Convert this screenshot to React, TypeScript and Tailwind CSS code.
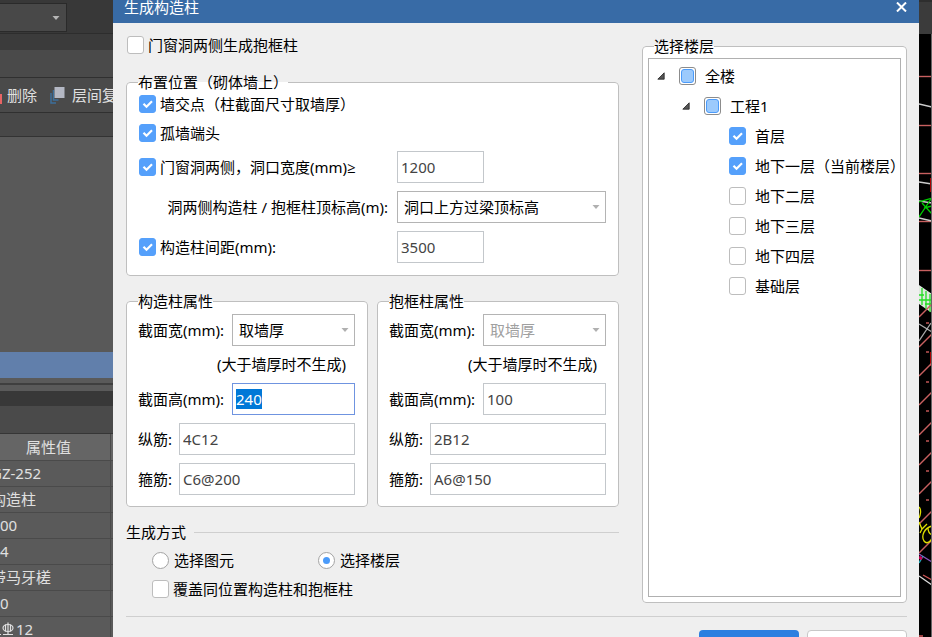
import { useEffect, useRef, useState, type ReactNode } from 'react';
import clsx from 'clsx';

type CheckState = 'on' | 'off' | 'partial';

function CheckBox({ label, state = 'off', gap = 'gap-1' }: { label: string; state?: CheckState; gap?: string }) {
  const [value, setValue] = useState<CheckState>(state);
  return (
    <label className={clsx('flex items-center whitespace-nowrap', gap)}>
      <span className="relative flex shrink-0">
        <input
          type="checkbox"
          checked={value === 'on'}
          onChange={() => setValue(value === 'on' ? 'off' : 'on')}
          className={clsx(
            'h-[18px] w-[17px] appearance-none rounded-[3px] border',
            value === 'on' && 'border-[#55a0fb] bg-[#55a0fb]',
            value === 'off' && 'border-[#bdbdbd] bg-white',
            value === 'partial' && 'border-[#8c8c8c] bg-white',
          )}
        />
        {value === 'on' && (
          <svg viewBox="0 0 17 18" className="pointer-events-none absolute inset-0 h-full w-full">
            <path d="M4.500 8.800l3 3 5.500-5.500" fill="none" stroke="#fff" strokeWidth="2.200" />
          </svg>
        )}
        {value === 'partial' && (
          <span className="pointer-events-none absolute inset-[2px] rounded-[3px] border border-[#4b9bfa] bg-[#9ccafc]" />
        )}
      </span>
      <span>{label}</span>
    </label>
  );
}

function Radio({ label, checked }: { label: string; checked?: boolean }) {
  return (
    <label className="flex items-center gap-[5px]">
      <span className="relative flex">
        <input
          type="radio"
          name="mode"
          defaultChecked={checked}
          className="peer size-[17px] appearance-none rounded-full border border-[#a3a3a3] bg-white"
        />
        <span className="pointer-events-none absolute inset-[5px] hidden rounded-full bg-[#4b9bfa] peer-checked:block" />
      </span>
      <span>{label}</span>
    </label>
  );
}

function Select({ id, value, disabled }: { id: string; value: string; disabled?: boolean }) {
  return (
    <div className="relative min-w-0 flex-1">
      <select
        id={id}
        disabled={disabled}
        className="block h-8 w-full appearance-none border border-[#b4b4b4] bg-white pl-[6px] text-black disabled:text-[#a0a0a0] disabled:opacity-100"
      >
        <option>{value}</option>
      </select>
      <svg viewBox="0 0 8 4" className="pointer-events-none absolute top-[14px] right-[6px] h-1 w-2">
        <path d="M0.500 0h7L4 4z" fill="#b0b0b0" />
      </svg>
    </div>
  );
}

const inputClass = 'block h-8 min-w-0 border border-[#c3c7cb] bg-white px-[3px] text-[#444] outline-none';

function GroupBox({ title, className, children }: { title: string; className?: string; children: ReactNode }) {
  return (
    <fieldset className={clsx('min-w-0 rounded-[4px] border border-[#bfbfbf] bg-white', className)}>
      <legend className="ml-[11px] leading-[22px]">{title}</legend>
      {children}
    </fieldset>
  );
}

type ColumnProps = { id: string; title: string; height: string; main: string; stirrup: string; active?: boolean };

function ColumnGroup({ id, title, height, main, stirrup, active }: ColumnProps) {
  const ref = useRef<HTMLInputElement>(null);

  useEffect(() => {
    if (active) {
      ref.current?.focus();
      ref.current?.select();
    }
  }, [active]);

  return (
    <GroupBox title={title}>
      <div className="flex flex-col pt-[2px] pr-3 pb-[11px] pl-[11px]">
        <div className="flex items-center">
          <label htmlFor={`${id}-width`} className="w-[94px] shrink-0">截面宽(mm):</label>
          <Select id={`${id}-width`} value="取墙厚" disabled={!active} />
        </div>
        <p className="pr-[9px] text-right leading-[37px]">(大于墙厚时不生成)</p>
        <div className="flex items-center">
          <label htmlFor={`${id}-height`} className="w-[94px] shrink-0">截面高(mm):</label>
          <input
            id={`${id}-height`}
            ref={ref}
            defaultValue={height}
            className={clsx(inputClass, 'flex-1 selection:bg-[#0078d7] selection:text-white focus:border-[#6f94e0]')}
          />
        </div>
        <div className="mt-2 flex items-center">
          <label htmlFor={`${id}-main`} className="w-[41px] shrink-0">纵筋:</label>
          <input id={`${id}-main`} defaultValue={main} className={clsx(inputClass, 'flex-1')} />
        </div>
        <div className="mt-2 flex items-center">
          <label htmlFor={`${id}-stirrup`} className="w-[41px] shrink-0">箍筋:</label>
          <input id={`${id}-stirrup`} defaultValue={stirrup} className={clsx(inputClass, 'flex-1')} />
        </div>
      </div>
    </GroupBox>
  );
}

const floors: { name: string; state: CheckState }[] = [
  { name: '首层', state: 'on' },
  { name: '地下一层（当前楼层）', state: 'on' },
  { name: '地下二层', state: 'off' },
  { name: '地下三层', state: 'off' },
  { name: '地下四层', state: 'off' },
  { name: '基础层', state: 'off' },
];

function TreeParent({ label }: { label: string }) {
  return (
    <div className="flex h-[30px] items-center gap-[14px]">
      <svg viewBox="0 0 8 8" className="size-2 shrink-0">
        <path d="M7.200 0.800v6.400H0.800z" fill="#555" stroke="#222" strokeWidth="0.800" />
      </svg>
      <CheckBox label={label} state="partial" gap="gap-[9px]" />
    </div>
  );
}

function FloorTree() {
  return (
    <ul className="mx-[5px] mt-[1px] mb-[5px] flex-1 overflow-hidden border border-[#b0b0b0] bg-white pt-[2px] pl-2">
      <li>
        <TreeParent label="全楼" />
        <ul className="pl-[25px]">
          <li>
            <TreeParent label="工程1" />
            <ul className="pl-[47px]">
              {floors.map((f) => (
                <li key={f.name} className="flex h-[30px] items-center">
                  <CheckBox label={f.name} state={f.state} gap="gap-[9px]" />
                </li>
              ))}
            </ul>
          </li>
        </ul>
      </li>
    </ul>
  );
}

const attributes = [
  { text: 'GZ-252', cut: true },
  { text: '构造柱', cut: true },
  { text: '00' },
  { text: '4' },
  { text: '带马牙槎', cut: true },
  { text: '0' },
  { text: '12', rebar: true },
];

function SidePanel() {
  return (
    <aside className="w-[113px] shrink-0 overflow-hidden bg-[#5a5a5a] whitespace-nowrap text-[#e0e0e0]">
      <div className="h-[34px] border-b border-[#2d2d2d] bg-[#383838] pt-[3px]">
        <button type="button" aria-label="楼层" className="flex h-[29px] w-[67px] items-center justify-end border border-l-0 border-[#2a2a2a] bg-[#484848] pr-[6px]">
          <svg viewBox="0 0 8 4" className="h-1 w-2">
            <path d="M0.500 0h7L4 4z" fill="#b5b5b5" />
          </svg>
        </button>
      </div>
      <div className="h-4 bg-[#3b3b3b]" />
      <div className="h-7 border-b border-[#303030] bg-[#4a4a4a]" />
      <div className="flex h-[35px] items-center border-b border-[#303030] bg-[#4a4a4a]">
        <span className="mt-2 h-[10px] w-[2px] shrink-0 bg-[#e86464]" />
        <button type="button" className="ml-[5px] shrink-0">删除</button>
        <button type="button" className="ml-[13px] flex shrink-0 items-center gap-[6px]">
          <svg viewBox="0 0 16 18" className="h-[18px] w-4">
            <path d="M1 7v10h5M3.500 4v10h5" fill="none" stroke="#3c6f9c" strokeWidth="1.500" />
            <path d="M4.500 1h10v11h-10z" fill="#b4b8c4" />
          </svg>
          <span>层间复</span>
        </button>
      </div>
      <div className="h-6 border-b border-[#333] bg-[#484848]" />
      <div className="h-[215px] bg-[#595959]" />
      <div className="h-[26px] bg-[#617fab]" />
      <div className="h-[7px] border-b-2 border-[#3f3f3f] bg-[#5a5a5a]" />
      <div className="h-[6px]" />
      <div className="h-[15px] bg-[#383838]" />
      <div className="h-7 border-b border-[#363636] bg-[#4a4a4a]" />
      <table className="w-full border-collapse">
        <thead>
          <tr className="h-[26px] bg-[#656565]">
            <th className="w-[110px] border-r border-b border-[#4a4a4a] p-0 pl-[26px] text-left leading-[24px] font-normal">属性值</th>
            <th className="border-b border-[#4a4a4a] p-0" />
          </tr>
        </thead>
        <tbody>
          {attributes.map((a) => (
            <tr key={a.text} className="h-[26px]">
              <td className="w-[110px] border-r border-b border-[#4a4a4a] p-0 leading-[24px]">
                <div className={clsx('flex items-center', a.cut && '-ml-[9px]')}>
                  {a.rebar && (
                    <svg viewBox="0 0 16 14" className="h-[14px] w-4" fill="none" stroke="#e0e0e0" strokeWidth="1.200">
                      <path d="M8 0.500v12M3 12.500h10M5.500 2.500v7M10.500 2.500v7M0 12.500h1" />
                      <ellipse cx="8" cy="6" rx="5" ry="3.500" />
                    </svg>
                  )}
                  {a.text}
                </div>
              </td>
              <td className="border-b border-[#4a4a4a] p-0" />
            </tr>
          ))}
        </tbody>
      </table>
    </aside>
  );
}

const gridLines = [76, 125, 173, 221, 270];
const hatchLines = [317, 347, 376, 405, 435, 465, 494, 524, 553];
const hatchDots = [323, 352, 382, 411, 441, 471, 500];

function DrawingStrip() {
  return (
    <div className="w-[13px] shrink-0 overflow-hidden bg-black">
      <svg width="13" height="637" viewBox="0 0 13 637" fill="none">
        <path d="M0 0h13v34H0z" fill="#3b3b3b" />
        <path d="M0 1h13" stroke="#222" />
        {gridLines.map((y) => (
          <path key={y} d={`M0 ${y}.5h13`} stroke="#c86060" strokeWidth="1.400" />
        ))}
        <path d="M0 104l13 3M0 182l13 2M0 201l13 2M0 218l13 3" stroke="#ccc" strokeWidth="1.300" />
        <path d="M0 217L12 199M0 202l13-4M3 203l10 11M5 208l8-2" stroke="#0c0" strokeWidth="1.300" />
        <path d="M12 178v14M12 352v14" stroke="#a00" strokeWidth="2" />
        <path d="M0 285l13 9v19L0 304z" fill="#dfe8df" />
        <path d="M3 288v17M7 291v18M11 294v18M0 300h13M0 295h5M6 304h7" stroke="#23dd23" strokeWidth="1.300" />
        {hatchLines.map((y) => (
          <path key={y} d={`M0 ${y}l13-13`} stroke="#c86060" strokeWidth="1.500" />
        ))}
        {hatchDots.map((y) => (
          <path key={y} d={`M7 ${y}h3`} stroke="#904040" strokeWidth="2" />
        ))}
        <path d="M0 324l13 8M0 341l12-18" stroke="#aaa" strokeWidth="1.300" />
        <path d="M0 507c3 3 1 9 0 11M0 522l3 7 5-5M3 529l-2 4M13 526c-8 2-11 10-8 15 3 4 7 0 8-3M9 528c0 4 2 6 4 7" stroke="#e0e000" strokeWidth="1.300" />
        <path d="M0 554l13 8" stroke="#8855bb" strokeWidth="1.300" />
        <path d="M0 563l4-7" stroke="#2ab" strokeWidth="1.500" />
        <path d="M0 557l3 2" stroke="#c05" strokeWidth="3" />
        <path d="M4 575l9 5M0 636h4" stroke="#d05555" strokeWidth="1.300" />
        <path d="M0 576l13 9" stroke="#ddd" strokeWidth="1.300" />
        <path d="M12.500 34v603" stroke="#666" />
      </svg>
    </div>
  );
}

export default function App() {
  return (
    <div className="flex h-screen overflow-hidden font-['Noto_Sans','Open_Sans','Noto_Sans_CJK_SC',sans-serif] text-[15px] leading-[22px] text-black">
      <SidePanel />
      <main className="flex min-w-0 flex-1 flex-col bg-[#efefef]">
        <header className="flex h-[23px] shrink-0 items-start justify-between bg-[#386ba6] pr-3 pl-[11px] text-white">
          <h1 className="leading-[14px]">生成构造柱</h1>
          <button type="button" aria-label="关闭" className="flex h-[14px] items-center">
            <svg viewBox="0 0 11 10" className="h-[10px] w-[11px]">
              <path d="M1 0.500l9 9M10 0.500l-9 9" stroke="#fff" strokeWidth="2" />
            </svg>
          </button>
        </header>

        <form className="pt-3 pr-3 pl-[13px]">
          <div className="flex gap-[23px]">
            <div className="flex min-w-0 flex-1 flex-col">
              <div className="flex h-5 items-center pl-[1px]">
                <CheckBox label="门窗洞两侧生成抱框柱" />
              </div>

              <GroupBox title="布置位置（砌体墙上）" className="mt-4">
                <div className="px-3 pb-3">
                  <div className="flex h-[22px] items-center">
                    <CheckBox label="墙交点（柱截面尺寸取墙厚）" state="on" />
                  </div>
                  <div className="flex h-9 items-center">
                    <CheckBox label="孤墙端头" state="on" />
                  </div>
                  <div className="flex items-center">
                    <div className="w-[258px] shrink-0">
                      <CheckBox label="门窗洞两侧，洞口宽度(mm)≥" state="on" />
                    </div>
                    <input aria-label="洞口宽度" defaultValue="1200" className={clsx(inputClass, 'w-[87px]')} />
                  </div>
                  <div className="mt-2 flex items-center">
                    <label htmlFor="top-level" className="w-[258px] shrink-0 pr-[9px] text-right whitespace-nowrap">
                      洞两侧构造柱 / 抱框柱顶标高(m):
                    </label>
                    <Select id="top-level" value="洞口上方过梁顶标高" />
                  </div>
                  <div className="mt-2 flex items-center">
                    <div className="w-[258px] shrink-0">
                      <CheckBox label="构造柱间距(mm):" state="on" />
                    </div>
                    <input aria-label="构造柱间距" defaultValue="3500" className={clsx(inputClass, 'w-[87px]')} />
                  </div>
                </div>
              </GroupBox>

              <div className="mt-[14px] grid grid-cols-2 gap-[9px]">
                <ColumnGroup id="gz" title="构造柱属性" height="240" main="4C12" stirrup="C6@200" active />
                <ColumnGroup id="bk" title="抱框柱属性" height="100" main="2B12" stirrup="A6@150" />
              </div>

              <fieldset className="mt-[14px] border-t border-[#cfcfcf]">
                <legend className="pr-2 leading-[22px]">生成方式</legend>
                <div className="pt-[2px] pl-[26px]">
                  <div className="flex h-[30px] items-center">
                    <div className="w-[166px]">
                      <Radio label="选择图元" />
                    </div>
                    <Radio label="选择楼层" checked />
                  </div>
                  <div className="flex h-7 items-center">
                    <CheckBox label="覆盖同位置构造柱和抱框柱" />
                  </div>
                </div>
              </fieldset>
            </div>

            <GroupBox title="选择楼层" className="flex w-[265px] shrink-0 flex-col">
              <FloorTree />
            </GroupBox>
          </div>

          <hr className="mt-[13px] border-[#cfcfcf]" />
          <div className="mt-[13px] flex justify-end gap-2">
            <button type="button" aria-label="确定" className="h-8 w-[100px] rounded-[4px] bg-[#2c7fe0]" />
            <button type="button" aria-label="取消" className="h-8 w-[100px] rounded-[4px] border border-[#c8c8c8] bg-white" />
          </div>
        </form>
      </main>
      <DrawingStrip />
    </div>
  );
}
